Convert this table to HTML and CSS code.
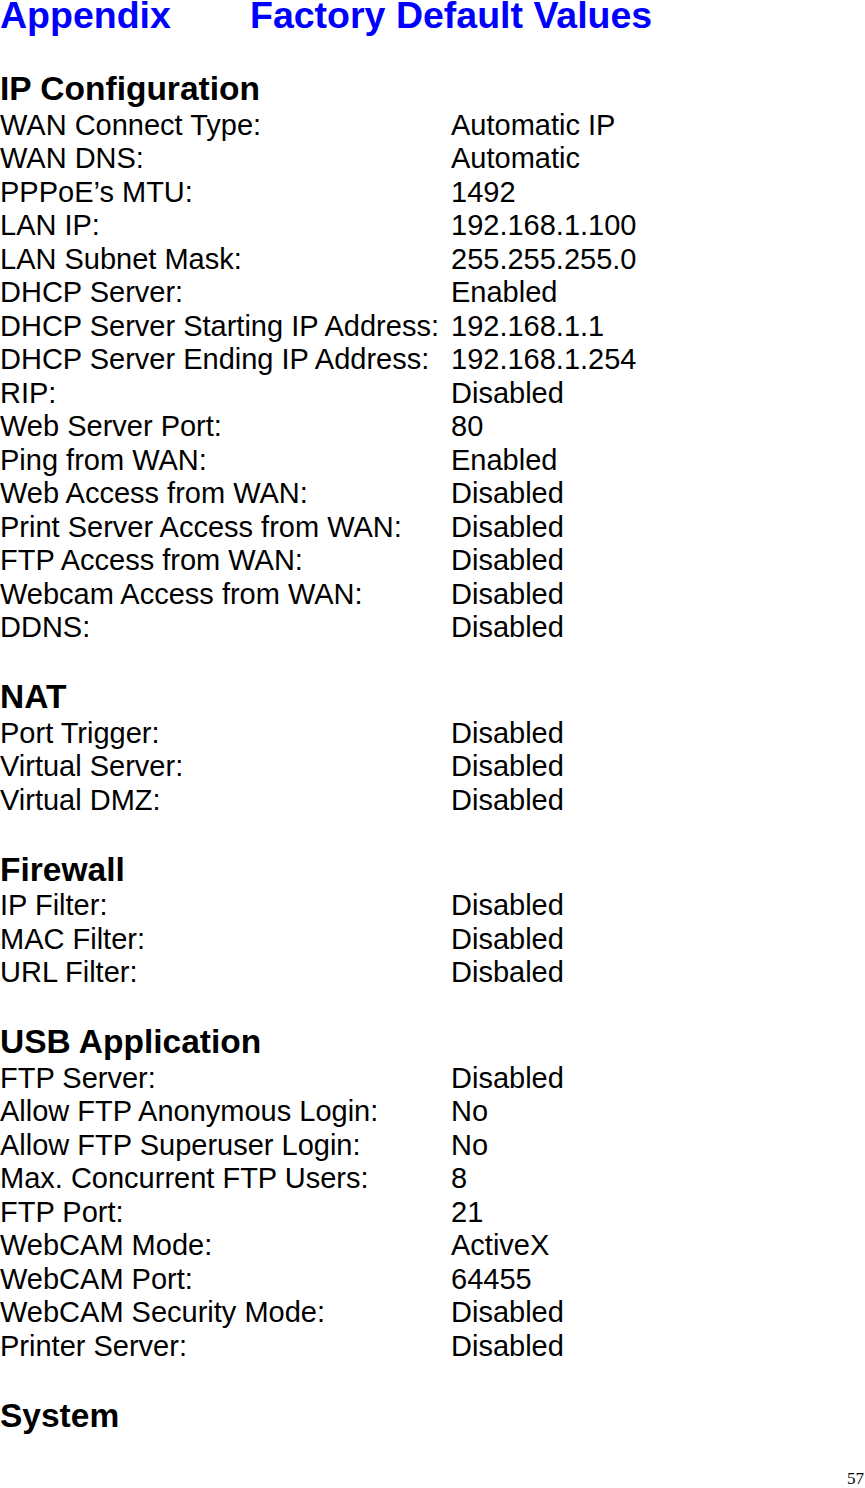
FILE: index.html
```html
<!DOCTYPE html>
<html lang="en">
<head>
<meta charset="utf-8">
<title>Appendix Factory Default Values</title>
<link rel="stylesheet" href="styles.css">
</head>
<body>
<main class="page">
  <h1 class="title"><span class="title-a">Appendix</span><span>Factory Default Values</span></h1>

  <section class="section first">
    <h2 class="sec-head">IP Configuration</h2>
    <dl class="kv">
      <dt>WAN Connect Type:</dt><dd>Automatic IP</dd>
      <dt>WAN DNS:</dt><dd>Automatic</dd>
      <dt>PPPoE’s MTU:</dt><dd>1492</dd>
      <dt>LAN IP:</dt><dd>192.168.1.100</dd>
      <dt>LAN Subnet Mask:</dt><dd>255.255.255.0</dd>
      <dt>DHCP Server:</dt><dd>Enabled</dd>
      <dt>DHCP Server Starting IP Address:</dt><dd>192.168.1.1</dd>
      <dt>DHCP Server Ending IP Address:</dt><dd>192.168.1.254</dd>
      <dt>RIP:</dt><dd>Disabled</dd>
      <dt>Web Server Port:</dt><dd>80</dd>
      <dt>Ping from WAN:</dt><dd>Enabled</dd>
      <dt>Web Access from WAN:</dt><dd>Disabled</dd>
      <dt>Print Server Access from WAN:</dt><dd>Disabled</dd>
      <dt>FTP Access from WAN:</dt><dd>Disabled</dd>
      <dt>Webcam Access from WAN:</dt><dd>Disabled</dd>
      <dt>DDNS:</dt><dd>Disabled</dd>
    </dl>
  </section>

  <section class="section">
    <h2 class="sec-head">NAT</h2>
    <dl class="kv">
      <dt>Port Trigger:</dt><dd>Disabled</dd>
      <dt>Virtual Server:</dt><dd>Disabled</dd>
      <dt>Virtual DMZ:</dt><dd>Disabled</dd>
    </dl>
  </section>

  <section class="section">
    <h2 class="sec-head">Firewall</h2>
    <dl class="kv">
      <dt>IP Filter:</dt><dd>Disabled</dd>
      <dt>MAC Filter:</dt><dd>Disabled</dd>
      <dt>URL Filter:</dt><dd>Disbaled</dd>
    </dl>
  </section>

  <section class="section">
    <h2 class="sec-head">USB Application</h2>
    <dl class="kv">
      <dt>FTP Server:</dt><dd>Disabled</dd>
      <dt>Allow FTP Anonymous Login:</dt><dd>No</dd>
      <dt>Allow FTP Superuser Login:</dt><dd>No</dd>
      <dt>Max. Concurrent FTP Users:</dt><dd>8</dd>
      <dt>FTP Port:</dt><dd>21</dd>
      <dt>WebCAM Mode:</dt><dd>ActiveX</dd>
      <dt>WebCAM Port:</dt><dd>64455</dd>
      <dt>WebCAM Security Mode:</dt><dd>Disabled</dd>
      <dt>Printer Server:</dt><dd>Disabled</dd>
    </dl>
  </section>

  <section class="section">
    <h2 class="sec-head">System</h2>
  </section>

  <footer class="page-num">57</footer>
</main>
</body>
</html>
```
FILE: styles.css
```css
html, body {
  margin: 0;
  padding: 0;
  background: #ffffff;
}

.page {
  display: flex;
  flex-direction: column;
  min-height: 1488px;
  box-sizing: border-box;
  font-family: "Liberation Sans", Arial, sans-serif;
  color: #000000;
}

.title {
  margin: 0;
  font-size: 37.5px;
  line-height: 31px;
  font-weight: bold;
  color: #0000ff;
  display: flex;
}

.title-a {
  width: 250px;
}

.section {
  margin-top: 33.5px;
}

.section.first {
  margin-top: 39px;
}

.sec-head {
  margin: 0;
  font-size: 33.5px;
  line-height: 38.5px;
  font-weight: bold;
}

.kv {
  margin: 0;
  display: grid;
  grid-template-columns: 451px 1fr;
  font-size: 29px;
  line-height: 33.5px;
}

.kv dt,
.kv dd {
  margin: 0;
  white-space: nowrap;
}

.page-num {
  margin-top: auto;
  padding: 0 1px 0 0;
  text-align: right;
  font-family: "Liberation Serif", "Times New Roman", serif;
  font-size: 17px;
  line-height: 18px;
}
```
